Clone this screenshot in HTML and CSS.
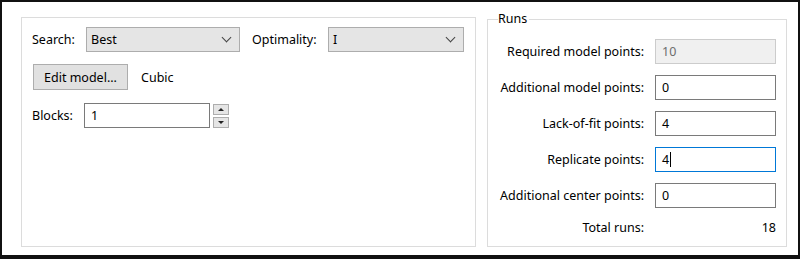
FILE: index.html
```html
<!DOCTYPE html>
<html lang="en">

<head>
  <meta charset="UTF-8" />
  <title>Design options</title>
  <link rel="stylesheet" href="styles.css">
</head>

<body>
  <div class="window">
    <div class="design-panel">
      <div class="row">
        <span class="label label-search">Search:</span>
        <div class="combo combo-search"><span>Best</span><span class="chevron"></span></div>
        <span class="label label-opt">Optimality:</span>
        <div class="combo combo-opt"><span>I</span><span class="chevron"></span></div>
      </div>

      <div class="row row-model">
        <button class="btn">Edit model...</button>
        <span class="model-name">Cubic</span>
      </div>

      <div class="row row-blocks">
        <span class="label label-blocks">Blocks:</span>
        <div class="textbox blocks-box">1</div>
        <div class="spinner">
          <div class="spin-btn"><span class="arrow-up"></span></div>
          <div class="spin-btn"><span class="arrow-down"></span></div>
        </div>
      </div>
    </div>

    <fieldset class="runs">
      <legend>Runs</legend>
      <div class="runs-grid">
        <span class="runs-label">Required model points:</span>
        <div class="textbox disabled">10</div>

        <span class="runs-label">Additional model points:</span>
        <div class="textbox">0</div>

        <span class="runs-label">Lack-of-fit points:</span>
        <div class="textbox">4</div>

        <span class="runs-label">Replicate points:</span>
        <div class="textbox focused">4<span class="caret"></span></div>

        <span class="runs-label">Additional center points:</span>
        <div class="textbox">0</div>

        <span class="runs-label">Total runs:</span>
        <span class="total-value">18</span>
      </div>
    </fieldset>
  </div>
</body>

</html>
```

FILE: styles.css
```css
* {
  margin: 0;
  padding: 0;
  box-sizing: border-box;
}

body {
  font-family: 'Noto Sans', 'Liberation Sans', sans-serif;
  font-size: 12.5px;
  color: #000;
  background-color: #fff;
}

.window {
  width: 800px;
  height: 259px;
  border: 2px solid #111;
  border-bottom-width: 4px;
  background-color: #fff;
  display: flex;
  align-items: flex-start;
  padding: 15px 11px 0 19px;
  gap: 11px;
}

.design-panel {
  width: 455px;
  height: 230px;
  border: 1px solid #dcdcdc;
  padding: 9px 0 0 10px;
  display: flex;
  flex-direction: column;
}

.row {
  display: flex;
  align-items: center;
  height: 25px;
}

.label-search {
  width: 54px;
}

.label-opt {
  margin-left: 12px;
  width: 76px;
}

.combo {
  height: 25px;
  border: 1px solid #adadad;
  background-color: #e5e5e5;
  display: flex;
  align-items: center;
  justify-content: space-between;
  padding: 0 9px 0 4px;
}

.combo-search {
  width: 154px;
}

.combo-opt {
  width: 136px;
}

.chevron {
  width: 7px;
  height: 7px;
  border-right: 1px solid #444;
  border-bottom: 1px solid #444;
  transform: rotate(45deg);
  margin-top: -4px;
}

.row-model {
  margin-top: 12px;
  height: 26px;
}

.btn {
  font: inherit;
  width: 95px;
  height: 26px;
  margin-left: 1px;
  border: 1px solid #adadad;
  background-color: #e1e1e1;
  color: #000;
}

.model-name {
  margin-left: 13px;
}

.row-blocks {
  margin-top: 13px;
}

.label-blocks {
  width: 52px;
}

.textbox {
  height: 25px;
  border: 1px solid #7a7a7a;
  background-color: #fff;
  padding: 0 6px;
  display: flex;
  align-items: center;
}

.blocks-box {
  width: 126px;
}

.spinner {
  margin-left: 3px;
  display: flex;
  flex-direction: column;
  gap: 2px;
}

.spin-btn {
  width: 16px;
  height: 11px;
  border: 1px solid #adadad;
  background-color: #e5e5e5;
  display: flex;
  align-items: center;
  justify-content: center;
}

.arrow-up,
.arrow-down {
  width: 0;
  height: 0;
  border-left: 3px solid transparent;
  border-right: 3px solid transparent;
}

.arrow-up {
  border-bottom: 3px solid #222;
}

.arrow-down {
  border-top: 3px solid #222;
}

.runs {
  width: 300px;
  height: 236px;
  margin-top: -6px;
  border: 1px solid #dcdcdc;
  padding: 0 10px 0 10px;
}

.runs legend {
  margin-left: 0;
  padding: 0 2px 0 0;
  line-height: 16px;
}

.runs-grid {
  display: grid;
  grid-template-columns: 146px 121px;
  column-gap: 11px;
  row-gap: 11px;
  margin-top: 12px;
  align-items: center;
}

.runs-label {
  text-align: right;
}

.textbox.disabled {
  background-color: #f0f0f0;
  border-color: #cccccc;
  color: #6d6d6d;
}

.textbox.focused {
  border-color: #0078d7;
}

.caret {
  width: 1px;
  height: 15px;
  background-color: #000;
  margin-left: 1px;
}

.total-value {
  text-align: right;
}
```
